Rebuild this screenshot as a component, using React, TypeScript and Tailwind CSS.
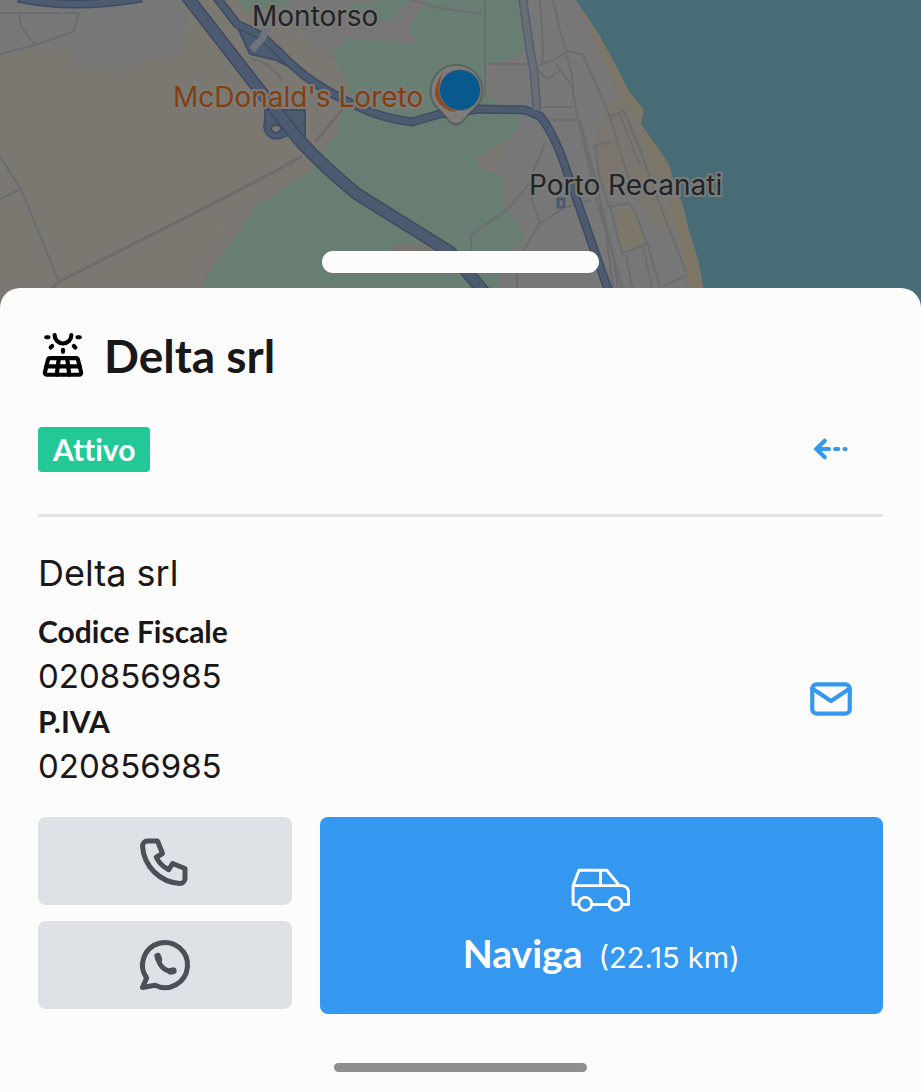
import { TbArrowNarrowLeftDashed, TbMail, TbPhone, TbSolarPanel2 } from "react-icons/tb"

const company = {
  name: "Delta srl",
  status: "Attivo",
  distance: "(22.15 km)",
  details: [
    { label: "Codice Fiscale", value: "020856985" },
    { label: "P.IVA", value: "020856985" },
  ],
}

const places = [
  { name: "Montorso", x: 252, y: 26, color: "#222425" },
  { name: "McDonald's Loreto", x: 173, y: 107, color: "#82400f" },
  { name: "Porto Recanati", x: 529, y: 195, color: "#222425" },
]

// main roads are drawn twice, a dark casing and a lighter core
const mainRoads = [
  { d: "M185 -6L258 88L300 141Q325 168 357 194L450 252L496 306", width: 13 },
  { d: "M214 -6L237 24L262 36L290 63L305 76Q330 94 357 106Q380 118 412 122L440 114L480 109L525 110L540 116Q553 132 564 163L604 278L614 306", width: 9 },
  { d: "M18 -2Q72 10 142 -2", width: 9 },
]

const lanes = [
  "M0 13H79L73 32L35 45L0 54M19 14L21 26L35 45",
  "M0 157L21 189L59 282M0 199L21 189",
  "M251 59Q270 62 282 80",
  "M398 -4L440 8L482 14M485 -4V98M488 64H529",
  "M540 -4L543 50L542 64M552 -4L560 30L572 75L574 102",
  "M538 66L553 60L568 51L583 55L609 114L634 197",
  "M538 70L547 79L561 70M556 64L572 86L578 120L598 205L612 250L618 288",
  "M544 107H573M546 120H576M580 120L604 215L615 306",
  "M545 143L532 174L530 194L540 223L526 246L517 260V306",
  "M471 306V235L509 208L532 180M540 223L566 207L591 200",
  "M608 117L624 111L641 152L656 195L686 272M619 113L640 165M612 142L595 145L599 175L609 207L629 203L634 210L648 245L660 288",
  "M600 205L612 250L622 288M610 206L622 254L648 243M643 245L652 288M626 255L636 306M663 286L687 275",
]

function MapBackground() {
  return (
    <svg
      viewBox="0 0 921 308"
      preserveAspectRatio="xMidYMin slice"
      className="block h-77 w-full bg-[#7a7871]"
      role="img"
      aria-label="Mappa"
    >
      <path d="M0 0H190L182 54L150 60L110 68H80L62 46L36 44L0 56Z" fill="#777777" />
      <path d="M480 0H600L700 308H480L500 150Z" fill="#777777" />
      <path d="M290 0H420V60H330L305 40Z" fill="#777675" />
      <path d="M306 160L270 176L248 215L205 280L200 260L240 205L290 165Z" fill="#7b7572" />

      <g fill="#697e72">
        <path d="M237 0H292L284 8H262L258 20Z" />
        <path d="M340 12L352 4L386 0H522L530 48L510 60L487 64V96L512 112H518Q524 130 502 143L476 158L478 166L504 178V205L522 232L520 244L502 256L496 306H196L204 280L230 244L255 207L306 174L336 136L342 112L350 90L332 52L346 38L394 42L417 44L408 26Z" />
      </g>
      <path d="M410 0H426L408 28L418 43L402 42L386 26Z" fill="#777675" />
      <path d="M392 246L440 242L454 252L386 256Z" fill="#77756d" />

      <path d="M576 0L600 37L613 60L628 90L642 110L640 124L660 151L669 165L673 180L683 205L690 234L698 260L707 308H921V0Z" fill="#486c75" />
      <path d="M576 0L600 36L613 60L628 90L644 110L641 124L660 151L669 165L673 180L683 205L682 212L690 234L698 260L707 308H690L682 250L668 200L652 170L636 128L622 100L606 65L590 30Z" fill="#7d7566" />
      <path d="M610 97L632 105L650 150L661 195L672 225L660 235L646 210L625 190L596 180V140Z" fill="#7b766d" />
      <path d="M614 212L632 208L645 243L622 252Z" fill="#7d7769" />

      <g fill="none" strokeLinejoin="round">
        <path d="M302 156L270 174L185 218L60 281L50 290M315 142L342 110" stroke="#6e6b6a" strokeWidth="3" />
        {lanes.map((d) => (
          <path key={d} d={d} stroke="#6b6c70" strokeWidth="2" />
        ))}
        {/* motorway junctions */}
        <g stroke="#414f66" fill="#4d5b71" strokeWidth="2">
          <path d="M236 24L262 33L282 50L300 72L276 60L250 54L243 39Z" />
          <path fillRule="evenodd" d="M265 110H305V140L295 132L286 136Q278 141 270 137Q262 132 265 120ZM271 130Q276 136 281 130Q282 125 276 125Q271 125 271 130Z" />
        </g>
        {mainRoads.map(({ d, width }) => (
          <path key={d} d={d} stroke="#3e4b62" strokeWidth={width} />
        ))}
        {mainRoads.map(({ d, width }) => (
          <path key={d} d={d} stroke="#4d5b71" strokeWidth={width - 3} />
        ))}
        <path d="M522 -6L530 50L534 72L537 110" stroke="#565f6e" strokeWidth="9" />
        <path d="M522 -6L530 50L534 72L537 110" stroke="#696e75" strokeWidth="6" />
        <path d="M252 50L256 45L262 39L268 26" stroke="#6f737b" strokeWidth="7" />
        <path d="M558 199H564V207H558Z" stroke="#4a5870" strokeWidth="3" />
      </g>

      {/* position pin */}
      <path d="M456 126Q451 126 446 119L434 106A27 27 0 1 1 479 106L466 119Q461 126 456 126Z" fill="#484b4a" opacity="0.5" />
      <path d="M456 123Q451 123 446 116L436 105A25 25 0 1 1 477 105L466 116Q461 123 456 123Z" fill="#7e7d7c" />
      <path d="M443 72Q424 100 450 111L456 112Q432 96 443 72Z" fill="#8c4b23" />
      <circle cx="460" cy="90" r="21" fill="#666d70" />
      <circle cx="460" cy="90" r="20" fill="#09598e" />

      <g
        className="font-['Inter',sans-serif] text-[28px] leading-none"
        stroke="#7b7b7a"
        strokeWidth="4"
        strokeLinejoin="round"
        paintOrder="stroke"
      >
        {places.map((place) => (
          <text key={place.name} x={place.x} y={place.y} fill={place.color}>
            {place.name}
          </text>
        ))}
      </g>
    </svg>
  )
}

function WhatsappIcon() {
  return (
    <svg
      viewBox="0 0 24 24"
      className="size-15"
      fill="none"
      stroke="currentColor"
      strokeWidth="2"
      strokeLinecap="round"
      strokeLinejoin="round"
      aria-hidden="true"
    >
      <path d="M3 21l1.65-3.8a9 9 0 1 1 3.4 2.9L3 21" />
      <path d="M9.2 8.7C9.3 12 11.8 14.6 15.2 14.7" />
      <path d="M9.1 8.5L9.5 9.7M14.2 14.5L15.3 14.3" strokeWidth="2.7" />
    </svg>
  )
}

function CarIcon() {
  return (
    <svg
      viewBox="393 62 183 138"
      className="h-[45px] w-15"
      fill="none"
      stroke="currentColor"
      strokeWidth="9"
      strokeLinejoin="round"
      aria-hidden="true"
    >
      <path d="M415 174H399V116L417 69H502L541 116H550Q569 119 569 138V174H550M457 174H508M399 116H541M483 69V116" />
      <circle cx="436" cy="172" r="20" />
      <circle cx="529" cy="172" r="20" />
    </svg>
  )
}

export default function App() {
  return (
    <main className="flex min-h-screen flex-col bg-[#fcfcfc] font-['Inter',sans-serif] text-[#1a1718]">
      <header className="relative">
        <MapBackground />
        <div className="absolute inset-x-0 bottom-[35px] mx-auto h-5.5 w-[30%] rounded-full bg-[#fcfcfc]" />
      </header>

      <section className="relative -mt-5 flex grow flex-col rounded-t-[20px] bg-[#fcfcfc] px-[38px] pt-10">
        <div className="flex items-center gap-4">
          <TbSolarPanel2 className="size-[50px] text-black" aria-hidden="true" />
          <h1 className="font-['Lato',sans-serif] text-[46px] leading-[56px] font-bold">{company.name}</h1>
        </div>

        <div className="mt-10 flex items-center justify-between">
          <span className="rounded-sm bg-[#22c997] px-[15px] font-['Lato',sans-serif] text-[30px] leading-[45px] font-bold text-white [font-variant-ligatures:none]">
            {company.status}
          </span>
          <button type="button" aria-label="Indietro" className="flex w-26 justify-center text-[#3498ef]">
            <TbArrowNarrowLeftDashed className="size-[50px]" />
          </button>
        </div>

        <hr className="mt-10 border-t-[3px] border-[#e1e2e4]" />

        <h2 className="mt-8 text-[36px] leading-[48px]">{company.name}</h2>
        <div className="mt-3 flex items-center justify-between">
          <dl className="leading-[45px]">
            {company.details.map((item) => (
              <div key={item.label}>
                <dt className="font-['Lato',sans-serif] text-[30px] font-bold">{item.label}</dt>
                <dd className="text-[33px]">{item.value}</dd>
              </div>
            ))}
          </dl>
          <button type="button" aria-label="Email" className="flex w-26 justify-center text-[#3498ef]">
            <TbMail className="size-[50px]" />
          </button>
        </div>

        <div className="mt-7 flex gap-7">
          <div className="flex w-[30%] flex-col gap-4">
            <button
              type="button"
              aria-label="Chiama"
              className="flex h-22 items-center justify-center rounded-lg bg-[#dee1e6] text-[#495057]"
            >
              <TbPhone className="size-15" />
            </button>
            <button
              type="button"
              aria-label="WhatsApp"
              className="flex h-22 items-center justify-center rounded-lg bg-[#dee1e6] text-[#495057]"
            >
              <WhatsappIcon />
            </button>
          </div>
          <button
            type="button"
            className="flex h-[197px] grow flex-col items-center justify-center rounded-lg bg-[#3498f0] pt-4 text-white"
          >
            <CarIcon />
            <span className="mt-4 flex items-baseline gap-4">
              <span className="font-['Lato',sans-serif] text-[39px] leading-[48px] font-bold">Naviga</span>
              <span className="text-[29px]">{company.distance}</span>
            </span>
          </button>
        </div>

        <div className="mx-auto mt-auto mb-5 h-[9px] w-[30%] rounded-full bg-[#8e8e8e]" />
      </section>
    </main>
  )
}
